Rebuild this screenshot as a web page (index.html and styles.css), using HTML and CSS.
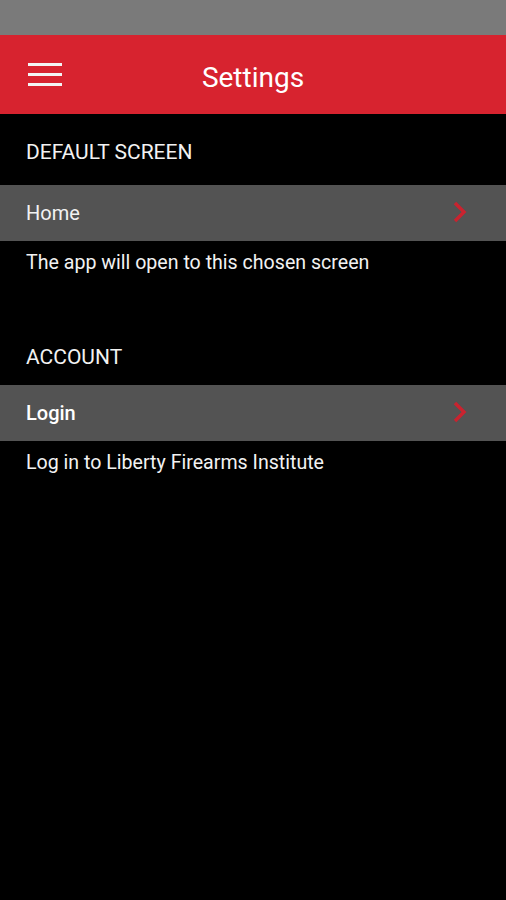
FILE: index.html
```html
<!DOCTYPE html>
<html lang="en">

<head>
    <meta charset="UTF-8">
    <meta name="viewport" content="width=device-width, initial-scale=1.0">
    <title>Settings</title>
    <link rel="stylesheet" href="styles.css">
</head>

<body>
    <div id="status-bar"></div>
    <div id="header">
        <div class="menu-btn">
            <span></span>
            <span></span>
            <span></span>
        </div>
        <div class="title">Settings</div>
    </div>
    <div id="content">
        <div class="section-title">DEFAULT SCREEN</div>
        <div class="row">
            <span>Home</span>
            <svg class="chevron" width="16" height="22" viewBox="0 0 16 22">
                <path d="M3 2 L12 11 L3 20" fill="none" stroke="#c9232f" stroke-width="3.5" />
            </svg>
        </div>
        <div class="note">The app will open to this chosen screen</div>

        <div class="section-title account">ACCOUNT</div>
        <div class="row">
            <span class="strong">Login</span>
            <svg class="chevron" width="16" height="22" viewBox="0 0 16 22">
                <path d="M3 2 L12 11 L3 20" fill="none" stroke="#c9232f" stroke-width="3.5" />
            </svg>
        </div>
        <div class="note">Log in to Liberty Firearms Institute</div>
    </div>
</body>

</html>
```

FILE: styles.css
```css
body,
html {
    width: 100%;
    height: 100%;
    padding: 0;
    margin: 0;
}

body {
    background: #000;
    color: #f2f2f2;
    font-family: Roboto, "Noto Sans", sans-serif;
}

#status-bar {
    height: 35px;
    background: #7a7a7a;
}

#header {
    position: relative;
    height: 79px;
    background: #d7232f;
    display: flex;
    align-items: center;
    justify-content: center;
}

#header .menu-btn {
    position: absolute;
    left: 28px;
    top: 28px;
    width: 34px;
    display: flex;
    flex-direction: column;
    gap: 7px;
}

#header .menu-btn span {
    display: block;
    height: 3px;
    background: #f4f4f4;
}

#header .title {
    font-size: 28px;
    color: #fff;
    margin-top: 5px;
}

#content {
    padding-top: 25px;
}

.section-title {
    font-size: 21px;
    padding-left: 26px;
    height: 46px;
    line-height: 26px;
}

.section-title.account {
    margin-top: 69px;
    height: 41px;
}

.row {
    height: 56px;
    background: #535353;
    display: flex;
    align-items: center;
    justify-content: space-between;
    padding: 0 38px 0 26px;
    font-size: 20px;
}

.row .strong {
    color: #fff;
    font-weight: 500;
}

.row .chevron {
    margin-top: -3px;
}

.note {
    font-size: 19.6px;
    padding-left: 26px;
    padding-top: 10px;
    line-height: 24px;
}
```
